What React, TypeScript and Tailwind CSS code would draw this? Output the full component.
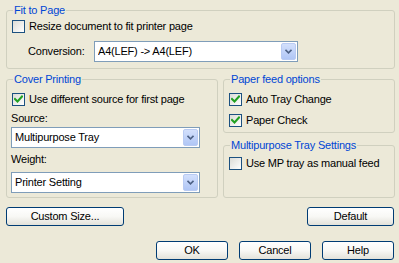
import type { ReactNode } from "react";

function CheckBox({ checked }: { checked?: boolean }) {
  return (
    <span className="relative flex h-[13px] w-[13px] shrink-0 items-center justify-center border border-[#1C5180] bg-gradient-to-br from-[#DCDCD7] to-[#FFFFFF]">
      {checked && (
        <svg width="9" height="9" viewBox="0 0 9 9">
          <path
            d="M1 4 L3.5 6.5 L8 1.5"
            fill="none"
            stroke="#21A121"
            strokeWidth="2"
            strokeLinecap="square"
          />
        </svg>
      )}
    </span>
  );
}

function CheckRow({ label, checked }: { label: string; checked?: boolean }) {
  return (
    <div className="flex h-[13px] items-center gap-[4px]">
      <CheckBox checked={checked} />
      <span className="leading-[13px]">{label}</span>
    </div>
  );
}

function Combo({ value, className }: { value: string; className: string }) {
  return (
    <div
      className={`flex h-[21px] items-center border border-[#7F9DB9] bg-white pl-[3px] pr-[1px] ${className}`}
    >
      <span className="flex-1 truncate leading-[13px]">{value}</span>
      <span className="flex h-[17px] w-[15px] items-center justify-center rounded-[2px] border border-[#B9CBF3] bg-gradient-to-b from-[#D3E0FC] to-[#B0C6F5]">
        <svg width="7" height="5" viewBox="0 0 7 5">
          <path
            d="M0.5 0.8 L3.5 3.8 L6.5 0.8"
            fill="none"
            stroke="#4D6185"
            strokeWidth="1.6"
          />
        </svg>
      </span>
    </div>
  );
}

function Group({
  title,
  className,
  children,
}: {
  title: string;
  className: string;
  children?: ReactNode;
}) {
  return (
    <fieldset
      className={`m-0 min-w-0 rounded-[3px] border border-[#D0D0BF] p-0 ${className}`}
    >
      <legend className="ml-[6px] px-[1px] leading-[14px] text-[#0046D5]">
        {title}
      </legend>
      {children}
    </fieldset>
  );
}

function Button({ label, className }: { label: string; className: string }) {
  return (
    <button
      className={`flex h-[19px] items-center justify-center rounded-[3px] border border-[#003C74] bg-gradient-to-b from-[#FFFFFF] via-[#F8F8F5] to-[#E3E2DA] leading-[13px] text-black ${className}`}
    >
      {label}
    </button>
  );
}

export default function App() {
  return (
    <div
      className="flex h-[263px] w-[399px] flex-col bg-[#ECE9D8] pl-[6px] pr-[4px] text-[11px] tracking-[-0.2px] text-black"
      style={{ fontFamily: '"Liberation Sans", Arial, sans-serif' }}
    >
      {/* Fit to Page */}
      <Group title="Fit to Page" className="mt-[3px] h-[66px]">
        <div className="flex flex-col pl-[5px] pt-[3px]">
          <CheckRow label="Resize document to fit printer page" />
          <div className="mt-[8px] flex items-center">
            <span className="w-[82px] shrink-0 pl-[16px]">Conversion:</span>
            <Combo value="A4(LEF) -> A4(LEF)" className="w-[204px]" />
          </div>
        </div>
      </Group>

      <div className="mt-[3px] flex gap-[5px]">
        {/* Cover Printing */}
        <Group title="Cover Printing" className="h-[126px] w-[212px]">
          <div className="flex flex-col px-[4px] pt-[7px]">
            <div className="pl-[1px]">
              <CheckRow label="Use different source for first page" checked />
            </div>
            <span className="mt-[6px] leading-[13px]">Source:</span>
            <Combo value="Multipurpose Tray" className="mt-[2px] w-[189px]" />
            <span className="mt-[5px] leading-[13px]">Weight:</span>
            <Combo value="Printer Setting" className="mt-[6px] w-[189px]" />
          </div>
        </Group>

        {/* Right column */}
        <div className="flex flex-1 flex-col">
          <Group title="Paper feed options" className="h-[61px]">
            <div className="flex flex-col gap-[8px] pl-[5px] pt-[7px]">
              <CheckRow label="Auto Tray Change" checked />
              <CheckRow label="Paper Check" checked />
            </div>
          </Group>
          <Group title="Multipurpose Tray Settings" className="mt-[5px] h-[60px]">
            <div className="pl-[5px] pt-[5px]">
              <CheckRow label="Use MP tray as manual feed" />
            </div>
          </Group>
        </div>
      </div>

      <div className="mt-[9px] flex justify-between pr-[1px]">
        <Button label="Custom Size..." className="w-[118px]" />
        <Button label="Default" className="w-[87px]" />
      </div>

      <div className="mt-[15px] flex justify-end gap-[11px] pr-[1px]">
        <Button label="OK" className="w-[72px]" />
        <Button label="Cancel" className="w-[72px]" />
        <Button label="Help" className="w-[72px]" />
      </div>
    </div>
  );
}
